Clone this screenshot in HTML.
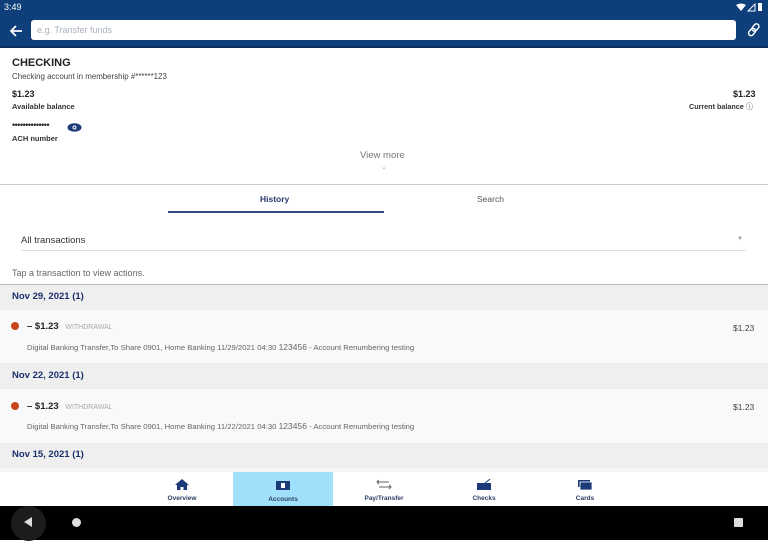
<!DOCTYPE html><html><head><style>
*{margin:0;padding:0;box-sizing:border-box}
body{width:768px;height:540px;overflow:hidden;font-family:"Liberation Sans",sans-serif;background:#fff;position:relative;color:#222}
.a{position:absolute;white-space:nowrap}
.date{position:absolute;left:0;width:768px;background:#efefef;color:#1b2f6b;font-weight:bold;font-size:9.5px;padding-left:12px}
.tx{position:absolute;left:0;width:768px;background:#f8f9fa}
.nav{position:absolute;top:472px;width:100px;height:34px;text-align:center;font-size:6.5px;font-weight:bold;color:#2c3d63}
.nav svg{display:block;margin:7px auto 5px}
</style></head><body>
<div class="a" style="left:0;top:0;width:768px;height:47px;background:#0f3f7a"></div>
<div class="a" style="left:0;top:46px;width:768px;height:2px;background:#0a2d5c"></div>
<div class="a" style="left:4px;top:2px;color:#fff;font-size:9px">3:49</div>
<svg class="a" style="left:736px;top:3px" width="30" height="9"><path d="M0 2 Q5 -1 10 2 L5 8Z" fill="#fff"/><path d="M12 8 L19 1 L19 8Z" fill="none" stroke="#fff"/><rect x="22" y="0" width="4" height="8" fill="#fff"/></svg>
<svg class="a" style="left:10px;top:25px" width="13" height="12"><path d="M12 6H2M6 1L1 6L6 11" stroke="#fff" stroke-width="1.8" fill="none"/></svg>
<div class="a" style="left:31px;top:20px;width:705px;height:20px;background:#fff;border-radius:3px;color:#a9b2bf;font-size:9px;padding:5px 6px">e.g. Transfer funds</div>
<svg class="a" style="left:747px;top:23px" width="14" height="14"><g stroke="#fff" stroke-width="1.4" fill="none"><rect x="6" y="0.5" width="5" height="8" rx="2.5" transform="rotate(40 8.5 4.5)"/><rect x="2.5" y="5" width="5" height="8" rx="2.5" transform="rotate(40 5 9)"/></g></svg>
<div class="a" style="left:12px;top:57px;font-size:11px;font-weight:bold">CHECKING</div>
<div class="a" style="left:12px;top:72px;font-size:7.9px;color:#444">Checking account in membership #******123</div>
<div class="a" style="left:12px;top:89px;font-size:9px;font-weight:bold">$1.23</div>
<div class="a" style="left:12px;top:102px;font-size:7.5px;font-weight:bold;color:#333">Available balance</div>
<div class="a" style="left:733px;top:89px;font-size:9px;font-weight:bold">$1.23</div>
<div class="a" style="left:689px;top:102px;font-size:7.2px;font-weight:bold;color:#333">Current balance <span style="color:#999">ⓘ</span></div>
<div class="a" style="left:12px;top:120px;font-size:9px;letter-spacing:-0.5px">••••••••••••••</div>
<svg class="a" style="left:67px;top:123px" width="15" height="9"><ellipse cx="7.5" cy="4.5" rx="7" ry="4.2" fill="#1b3a78"/><circle cx="7.5" cy="4.5" r="2" fill="#fff"/><circle cx="7.5" cy="4.5" r="1" fill="#1b3a78"/></svg>
<div class="a" style="left:12px;top:134px;font-size:7.5px;font-weight:bold;color:#333">ACH number</div>
<div class="a" style="left:360px;top:150px;font-size:9.5px;color:#777">View more</div>
<div class="a" style="left:381px;top:163px;font-size:7px;color:#aaa">⌄</div>
<div class="a" style="left:0;top:184px;width:768px;height:1px;background:#ccc"></div>
<div class="a" style="left:260px;top:194px;font-size:8.5px;color:#2a3870;font-weight:bold">History</div>
<div class="a" style="left:477px;top:194px;font-size:8.5px;color:#555">Search</div>
<div class="a" style="left:168px;top:211px;width:216px;height:2px;background:#2a4a80"></div>
<div class="a" style="left:21px;top:235px;font-size:9.5px;color:#333">All transactions</div>
<div class="a" style="left:737px;top:236px;font-size:6px;color:#999">▼</div>
<div class="a" style="left:21px;top:250px;width:725px;height:1px;background:#ddd"></div>
<div class="a" style="left:12px;top:268px;font-size:9px;color:#666">Tap a transaction to view actions.</div>
<div class="a" style="left:0;top:284px;width:768px;height:1px;background:#bbb"></div>
<div class="date" style="top:285px;height:25px;line-height:24px">Nov 29, 2021 (1)</div>
<div class="tx" style="top:310px;height:53px"></div>
<div class="a" style="left:11px;top:322px;width:8px;height:8px;border-radius:50%;background:#c4461a"></div>
<div class="a" style="left:27px;top:321px;font-size:9.5px;font-weight:bold">– $1.23 <span style="font-size:7px;color:#aaa;font-weight:normal;margin-left:4px">WITHDRAWAL</span></div>
<div class="a" style="left:733px;top:323px;font-size:8.5px;color:#444">$1.23</div>
<div class="a" style="left:27px;top:342px;font-size:7.7px;color:#666">Digital Banking Transfer,To Share 0901, Home Banking 11/29/2021 04:30 <span style="font-size:8.5px">123456</span> - Account Renumbering testing</div>
<div class="date" style="top:363px;height:26px;line-height:26px">Nov 22, 2021 (1)</div>
<div class="tx" style="top:389px;height:54px"></div>
<div class="a" style="left:11px;top:402px;width:8px;height:8px;border-radius:50%;background:#c4461a"></div>
<div class="a" style="left:27px;top:401px;font-size:9.5px;font-weight:bold">– $1.23 <span style="font-size:7px;color:#aaa;font-weight:normal;margin-left:4px">WITHDRAWAL</span></div>
<div class="a" style="left:733px;top:402px;font-size:8.5px;color:#444">$1.23</div>
<div class="a" style="left:27px;top:421px;font-size:7.7px;color:#666">Digital Banking Transfer,To Share 0901, Home Banking 11/22/2021 04:30 <span style="font-size:8.5px">123456</span> - Account Renumbering testing</div>
<div class="date" style="top:443px;height:25px;line-height:24px">Nov 15, 2021 (1)</div>
<div class="a" style="left:0;top:468px;width:768px;height:4px;background:#f6f6f6"></div>
<div class="a" style="left:0;top:472px;width:768px;height:34px;background:#fff"></div>
<div class="nav" style="left:132px"><svg width="14" height="11"><path d="M7 0L0 6H2V11H5.5V8H8.5V11H12V6H14Z" fill="#1b3a78"/></svg>Overview</div>
<div class="nav" style="left:233px;background:#a0e0fb"><svg width="14" height="9" style="margin-top:9px;margin-bottom:6px"><rect width="14" height="9" fill="#1b3a78"/><rect x="5" y="2" width="4" height="5" fill="#fff"/></svg>Accounts</div>
<div class="nav" style="left:334px"><svg width="16" height="11"><path d="M3 1L1 3L3 5M1 3H13M13 6L15 8L13 10M15 8H3" stroke="#666" fill="none"/></svg>Pay/Transfer</div>
<div class="nav" style="left:434px"><svg width="14" height="11"><rect y="4" width="14" height="7" fill="#1b3a78"/><path d="M6 6L13 0" stroke="#1b3a78"/></svg>Checks</div>
<div class="nav" style="left:535px"><svg width="14" height="11"><rect y="1" width="12" height="7" fill="#1b3a78"/><rect x="2" y="3" width="12" height="8" fill="#1b3a78" stroke="#fff" stroke-width="0.8"/></svg>Cards</div>
<div class="a" style="left:0;top:506px;width:768px;height:34px;background:#000"></div>
<div class="a" style="left:11px;top:506px;width:35px;height:35px;border-radius:50%;background:#1c1c1c"></div>
<div class="a" style="left:24px;top:517px;width:0;height:0;border-top:5px solid transparent;border-bottom:5px solid transparent;border-right:8px solid #ddd"></div>
<div class="a" style="left:72px;top:518px;width:9px;height:9px;border-radius:50%;background:#ddd"></div>
<div class="a" style="left:734px;top:518px;width:9px;height:9px;border-radius:1px;background:#ddd"></div>
</body></html>
